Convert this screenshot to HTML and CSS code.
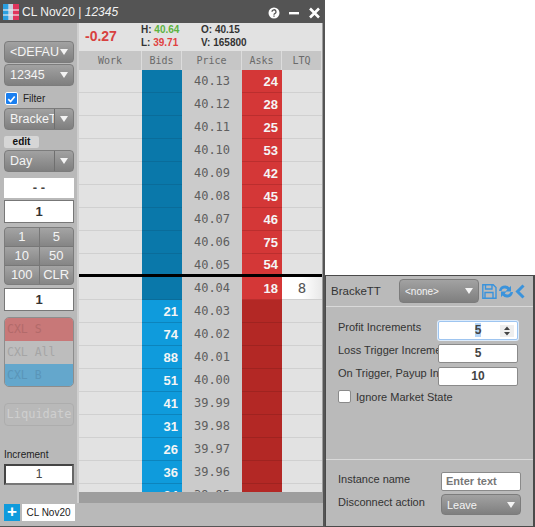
FILE: index.html
```html
<!DOCTYPE html>
<html>
<head>
    <meta charset="utf-8">
    <title>CL Nov20</title>
    <link rel="stylesheet" href="styles.css">
</head>
<body>
    <div class="window">
        <div class="titlebar">
            <svg class="logo" width="16" height="16" viewBox="0 0 16 16">
                <rect width="5" height="16" fill="#2a9fe0"/>
                <rect x="5" width="1" height="16" fill="#8fc6e8"/>
                <rect x="6" width="4" height="16" fill="#c8cfdc"/>
                <rect x="10" width="6" height="16" fill="#e0355c"/>
                <rect y="5" width="16" height="2" fill="#e8e8ee" opacity="0.6"/>
                <rect y="10" width="16" height="2" fill="#e8e8ee" opacity="0.6"/>
            </svg>
            <span class="title">CL Nov20 | <i>12345</i></span>
            <svg class="win-icons" width="54" height="14" viewBox="0 0 54 14">
                <circle cx="8" cy="7" r="5.500" fill="#fff"/>
                <path d="M6 5.800a2 2 0 1 1 2.800 1.800c-.6.300-.8.600-.8 1.200M8 9.600v1.200" fill="none" stroke="#545454" stroke-width="1.300"/>
                <rect x="23" y="6" width="10" height="2.400" fill="#fff"/>
                <path d="M44 2.500l9 9M53 2.500l-9 9" stroke="#fff" stroke-width="2.600"/>
            </svg>
        </div>
        <div class="body">
            <div class="sidebar">
                <div class="select first"><span>&lt;DEFAULT&gt;</span><b class="arrow"></b></div>
                <div class="select"><span>12345</span><b class="arrow"></b></div>
                <label class="filter"><span class="check"><svg width="12" height="12" viewBox="0 0 12 12"><path d="M2.500 6.200l2.500 2.600 4.500-5.600" fill="none" stroke="#fff" stroke-width="1.800"/></svg></span>Filter</label>
                <div class="select split"><span>BrackeTT</span><b class="arrow"></b></div>
                <div class="edit">edit</div>
                <div class="select split"><span>Day</span><b class="arrow"></b></div>
                <div class="dash">- -</div>
                <div class="qty">1</div>
                <div class="qty-grid">
                    <div>1</div><div>5</div>
                    <div>10</div><div>50</div>
                    <div>100</div><div>CLR</div>
                </div>
                <div class="qty">1</div>
                <div class="cxl">
                    <div class="cxl-s">CXL S</div>
                    <div class="cxl-all">CXL All</div>
                    <div class="cxl-b">CXL B</div>
                </div>
                <div class="liquidate">Liquidate</div>
                <div class="inc-label">Increment</div>
                <div class="inc">1</div>
            </div>
            <div class="main">
                <div class="stats">
                    <div class="change">-0.27</div>
                    <div class="hl">
                        <div>H: <span class="green">40.64</span></div>
                        <div>L: <span class="red">39.71</span></div>
                    </div>
                    <div class="ov">
                        <div>O: 40.15</div>
                        <div>V: 165800</div>
                    </div>
                </div>
                <div class="head">
                    <div>Work</div><div>Bids</div><div>Price</div><div>Asks</div><div>LTQ</div>
                </div>
                <div class="rows">
                    <div class="row"><div></div><div class="bid"></div><div class="price">40.13</div><div class="ask">24</div><div></div></div>
                    <div class="row"><div></div><div class="bid"></div><div class="price">40.12</div><div class="ask">28</div><div></div></div>
                    <div class="row"><div></div><div class="bid"></div><div class="price">40.11</div><div class="ask">25</div><div></div></div>
                    <div class="row"><div></div><div class="bid"></div><div class="price">40.10</div><div class="ask">53</div><div></div></div>
                    <div class="row"><div></div><div class="bid"></div><div class="price">40.09</div><div class="ask">42</div><div></div></div>
                    <div class="row"><div></div><div class="bid"></div><div class="price">40.08</div><div class="ask">45</div><div></div></div>
                    <div class="row"><div></div><div class="bid"></div><div class="price">40.07</div><div class="ask">46</div><div></div></div>
                    <div class="row"><div></div><div class="bid"></div><div class="price">40.06</div><div class="ask">75</div><div></div></div>
                    <div class="row inside"><div></div><div class="bid"></div><div class="price">40.05</div><div class="ask">54</div><div></div></div>
                    <div class="row"><div></div><div class="bid"></div><div class="price">40.04</div><div class="ask">18</div><div class="ltq">8</div></div>
                    <div class="row"><div></div><div class="bid live">21</div><div class="price">40.03</div><div class="ask empty"></div><div></div></div>
                    <div class="row"><div></div><div class="bid live">74</div><div class="price">40.02</div><div class="ask empty"></div><div></div></div>
                    <div class="row"><div></div><div class="bid live">88</div><div class="price">40.01</div><div class="ask empty"></div><div></div></div>
                    <div class="row"><div></div><div class="bid live">51</div><div class="price">40.00</div><div class="ask empty"></div><div></div></div>
                    <div class="row"><div></div><div class="bid live">41</div><div class="price">39.99</div><div class="ask empty"></div><div></div></div>
                    <div class="row"><div></div><div class="bid live">31</div><div class="price">39.98</div><div class="ask empty"></div><div></div></div>
                    <div class="row"><div></div><div class="bid live">26</div><div class="price">39.97</div><div class="ask empty"></div><div></div></div>
                    <div class="row"><div></div><div class="bid live">36</div><div class="price">39.96</div><div class="ask empty"></div><div></div></div>
                    <div class="row"><div></div><div class="bid live">24</div><div class="price">39.95</div><div class="ask empty"></div><div></div></div>
                </div>
                <div class="scrollbar"></div>
            </div>
        </div>
        <div class="tabs">
            <div class="add">+</div>
            <div class="tab">CL Nov20</div>
        </div>
    </div>

    <div class="panel">
        <div class="panel-head">
            <span class="panel-name">BrackeTT</span>
            <div class="select none"><span>&lt;none&gt;</span><b class="arrow"></b></div>
            <svg class="tools" width="44" height="15" viewBox="0 0 44 15">
                <path d="M.8.800h10.400l2.800 2.800v10.600h-13.200z M3.500 1v4h6.500v-4 M3 14v-5.500h8v5.500" fill="none" stroke="#3a93dc" stroke-width="1.400"/>
                <path d="M17 7a6 6 0 0 1 10.500-3.500l1.500-1.700v5.700h-5.500l1.800-1.900a3.500 3.500 0 0 0-5.900 1.400z M31 8a6 6 0 0 1-10.500 3.500l-1.500 1.700v-5.700h5.500l-1.800 1.900a3.500 3.500 0 0 0 5.900-1.400z" fill="#3a93dc"/>
                <path d="M41.500 1.500l-6 6 6 6" fill="none" stroke="#3a93dc" stroke-width="3"/>
            </svg>
        </div>
        <div class="panel-form">
            <div class="field">
                <span class="field-label">Profit Increments</span>
                <div class="input focus"><mark>5</mark><svg class="spin" width="14" height="12" viewBox="0 0 14 12"><rect width="14" height="12" fill="#eee"/><path d="M4 5l3-3.500 3 3.500zM4 7l3 3.500 3-3.500z" fill="#444"/></svg></div>
            </div>
            <div class="field">
                <span class="field-label">Loss Trigger Increments</span>
                <div class="input">5</div>
            </div>
            <div class="field">
                <span class="field-label">On Trigger, Payup Increments</span>
                <div class="input">10</div>
            </div>
            <label class="ignore"><span class="box"></span>Ignore Market State</label>
        </div>
        <div class="panel-foot">
            <div class="foot-row">
                <span class="foot-label">Instance name</span>
                <div class="text-input">Enter text</div>
            </div>
            <div class="foot-row">
                <span class="foot-label">Disconnect action</span>
                <div class="select leave"><span>Leave</span><b class="arrow"></b></div>
            </div>
        </div>
    </div>
</body>
</html>
```
FILE: styles.css
```css
*{
    margin: 0;
    padding: 0;
    box-sizing: border-box;
}
body{
    width: 535px;
    height: 527px;
    background: #fff;
    font-family: "Liberation Sans", Arial, sans-serif;
    overflow: hidden;
    position: relative;
}
.window{
    width: 325px;
    height: 527px;
    display: flex;
    flex-direction: column;
    background: #b9b9b9;
    border-right: 2px solid #555;
    border-bottom: 1px solid #555;
}
.titlebar{
    height: 23px;
    flex: none;
    background: #545454;
    color: #f2f2f2;
    display: flex;
    align-items: center;
    padding-left: 3px;
    font-size: 12px;
}
.title{
    margin: 1px 0 0 3px;
    flex: 1;
}
.win-icons{
    margin: 3px 3px 0 0;
}
.body{
    flex: 1;
    display: flex;
    min-height: 0;
}

/* left column */
.sidebar{
    width: 79px;
    flex: none;
    padding: 0 3px 0 4px;
    border-right: 2px solid #cfcfcf;
    display: flex;
    flex-direction: column;
}
.select{
    height: 22px;
    flex: none;
    border: 1px solid #7c7c7c;
    border-radius: 4px;
    background: linear-gradient(#a2a2a2, #7f7f7f);
    color: #f4f4f4;
    font-size: 12.500px;
    display: flex;
    align-items: center;
    padding-left: 5px;
    overflow: hidden;
}
.select span{
    flex: 1;
    min-width: 0;
    margin-right: -4px;
    overflow: hidden;
    white-space: nowrap;
}
.select.first{
    margin-top: 18px;
    margin-bottom: 1px;
}
.arrow{
    flex: none;
    width: 18px;
    height: 100%;
    display: flex;
    align-items: center;
    justify-content: center;
}
.arrow::after{
    content: "";
    border-left: 4px solid transparent;
    border-right: 4px solid transparent;
    border-top: 6px solid #f4f4f4;
}
.select.split span{
    margin-right: 0;
}
.select.split .arrow{
    width: 19px;
    border-left: 1px solid #6f6f6f;
}
.filter{
    height: 13px;
    flex: none;
    margin: 6px 0 3px 1px;
    display: flex;
    align-items: center;
    font-size: 10px;
    color: #222;
}
.check{
    width: 13px;
    height: 13px;
    border-radius: 2px;
    background: #1a7ff0;
    border: 1px solid #fff;
    margin-right: 5px;
    display: flex;
    align-items: center;
    justify-content: center;
}
.edit{
    width: 35px;
    height: 12px;
    flex: none;
    margin: 6px 0 2px;
    background: #d6d6d6;
    border-radius: 2px;
    font-size: 10px;
    font-weight: bold;
    line-height: 12px;
    text-align: center;
    color: #111;
}
.dash{
    height: 20px;
    flex: none;
    margin-top: 6px;
    background: #fff;
    text-align: center;
    line-height: 20px;
    font-size: 13px;
    font-weight: bold;
    color: #444;
}
.qty{
    height: 23px;
    flex: none;
    margin-top: 2px;
    background: #fff;
    border: 1px solid #777;
    text-align: center;
    line-height: 21px;
    font-size: 13px;
    font-weight: bold;
    color: #333;
}
.qty-grid{
    height: 58px;
    flex: none;
    margin: 4px 0 1px;
    display: grid;
    grid-template-columns: 1fr 1fr;
    grid-template-rows: repeat(3, 1fr);
    border: 1px solid #7c7c7c;
    border-radius: 4px;
    overflow: hidden;
    gap: 1px;
    background: #777;
}
.qty-grid div{
    background: linear-gradient(#a4a4a4, #858585);
    color: #f4f4f4;
    font-size: 13px;
    text-align: center;
    line-height: 18px;
}
.cxl{
    height: 70px;
    flex: none;
    margin-top: 6px;
    border: 1px solid #8d8d8d;
    border-radius: 5px;
    overflow: hidden;
    font-family: "DejaVu Sans Mono", monospace;
    font-size: 11.500px;
    line-height: 23px;
    color: #a5a5a5;
}
.cxl div{
    height: 23px;
    padding-left: 2px;
}
.cxl-s{
    background: #c87878;
    color: #b26a6a;
}
.cxl-all{
    background: #bdbdbd;
}
.cxl-b{
    background: #64a7cc;
    color: #5a95b8;
}
.liquidate{
    height: 23px;
    flex: none;
    margin-top: 16px;
    border: 1px solid #adadad;
    border-radius: 4px;
    font-family: "DejaVu Sans Mono", monospace;
    font-size: 12px;
    line-height: 21px;
    text-align: center;
    color: #cfcfcf;
}
.inc-label{
    margin-top: 22px;
    font-size: 10px;
    line-height: 13px;
    color: #222;
}
.inc{
    height: 21px;
    flex: none;
    margin-top: 3px;
    background: #fff;
    border: 2px solid #444;
    border-right-color: #666;
    border-bottom-color: #777;
    text-align: center;
    line-height: 17px;
    font-size: 12px;
    color: #444;
}

/* ladder */
.main{
    flex: 1;
    min-width: 0;
    display: flex;
    flex-direction: column;
    background: #e2e2e2;
    border-right: 1px solid #9c9c9c;
}
.stats{
    height: 28px;
    flex: none;
    display: flex;
    font-size: 10px;
    font-weight: bold;
    color: #333;
    line-height: 13px;
}
.change{
    width: 62px;
    padding-left: 6px;
    font-size: 14px;
    line-height: 27px;
    color: #d8413f;
}
.hl{
    width: 47px;
}
.ov{
    margin-left: 13px;
}
.green{
    color: #5cb340;
}
.red{
    color: #e04040;
}
.head, .row{
    display: grid;
    grid-template-columns: 63px 40px 60px 40px 40px;
}
.head{
    height: 19px;
    flex: none;
    font-family: "DejaVu Sans Mono", monospace;
    font-size: 10px;
    line-height: 19px;
    text-align: center;
    color: #6a6a6a;
}
.head div{
    background: #c6c6c6;
    border-right: 1px solid #dcdcdc;
}
.rows{
    flex: 1;
    min-height: 0;
    overflow: hidden;
}
.row{
    height: 23px;
    border-bottom: 1px solid #d0d0d0;
}
.row div{
    line-height: 23px;
}
.row .bid{
    background: #0a78aa;
    border-bottom: 1px solid #0a6c9a;
    height: 23px;
}
.row .live{
    background: #0f9bdc;
    border-bottom: 1px solid #0c84bd;
}
.bid, .ask{
    color: #f5f5f5;
    font-size: 13px;
    font-weight: bold;
    text-align: right;
    padding-right: 4px;
}
.row .price{
    background: #cbcbcb;
    text-align: center;
    height: 23px;
    font-family: "DejaVu Sans Mono", monospace;
    font-size: 12px;
    color: #5e5e5e;
}
.row .ask{
    background: #d43737;
    height: 23px;
    border-bottom: 1px solid #bb2e2e;
}
.row .empty{
    background: #b32825;
    border-bottom: 1px solid #9f2320;
}
.row .ltq{
    height: 22px;
    background: linear-gradient(90deg, #fff 50%, #e8e8e8);
    text-align: center;
    font-family: "DejaVu Sans Mono", monospace;
    font-size: 14px;
    color: #555;
}
.row.inside{
    border-bottom: 3px solid #000;
}
.row.inside div{
    height: 20px;
    line-height: 22px;
    border-bottom: 0;
}
.scrollbar{
    height: 11px;
    flex: none;
    background: #9e9e9e;
}
.tabs{
    height: 23px;
    flex: none;
    display: flex;
    align-items: flex-start;
    padding: 1px 0 0 4px;
}
.add{
    width: 16px;
    height: 17px;
    background: #0f9bdc;
    color: #fff;
    font-size: 17px;
    font-weight: bold;
    line-height: 16px;
    text-align: center;
}
.tab{
    width: 53px;
    height: 17px;
    margin-left: 2px;
    background: #fff;
    color: #222;
    font-size: 10px;
    line-height: 17px;
    text-align: center;
}

/* floating settings panel */
.panel{
    position: absolute;
    left: 325px;
    top: 275px;
    width: 210px;
    height: 252px;
    background: #bababa;
    border: 1px solid #4a4a4a;
    border-right-width: 2px;
    display: flex;
    flex-direction: column;
}
.panel-head{
    height: 31px;
    flex: none;
    display: flex;
    align-items: center;
    border-bottom: 1px solid #d9d9d9;
    padding-left: 5px;
}
.panel-name{
    width: 68px;
    font-size: 11.500px;
    color: #333;
}
.select.none{
    width: 80px;
    height: 24px;
    font-size: 10px;
}
.tools{
    margin-left: 3px;
}
.panel-form{
    flex: 1;
    padding-top: 12px;
}
.field{
    height: 23px;
    display: flex;
    align-items: center;
    margin-left: 12px;
    font-size: 11px;
    color: #333;
}
.field-label{
    width: 100px;
    flex: none;
    margin-bottom: 8px;
    overflow: hidden;
    white-space: nowrap;
}
.input{
    width: 80px;
    height: 19px;
    background: #fff;
    border: 1px solid #8a8a8a;
    border-radius: 2px;
    text-align: center;
    font-size: 12px;
    font-weight: bold;
    line-height: 17px;
    color: #444;
    position: relative;
}
.input.focus{
    border-color: #9ec5f0;
    box-shadow: 0 0 0 1px #dcebfb;
}
.input mark{
    background: #b4d5f7;
    color: #444;
}
.spin{
    position: absolute;
    right: 3px;
    top: 3px;
}
.ignore{
    display: flex;
    align-items: center;
    margin: 2px 0 0 12px;
    font-size: 11px;
    color: #333;
}
.box{
    width: 13px;
    height: 13px;
    background: #fff;
    border: 1px solid #8a8a8a;
    border-radius: 2px;
    margin-right: 5px;
}
.panel-foot{
    height: 67px;
    flex: none;
    border-top: 1px solid #d9d9d9;
    padding-top: 10px;
}
.foot-row{
    height: 23px;
    display: flex;
    align-items: center;
    padding-left: 12px;
    font-size: 11px;
    color: #333;
}
.foot-label{
    width: 103px;
    flex: none;
    margin-bottom: 6px;
}
.text-input{
    width: 80px;
    height: 19px;
    background: #fff;
    border: 1px solid #8a8a8a;
    border-radius: 2px;
    padding-left: 4px;
    font-size: 11px;
    font-weight: bold;
    line-height: 17px;
    color: #777;
}
.select.leave{
    width: 80px;
    height: 21px;
    font-size: 11px;
}
```
